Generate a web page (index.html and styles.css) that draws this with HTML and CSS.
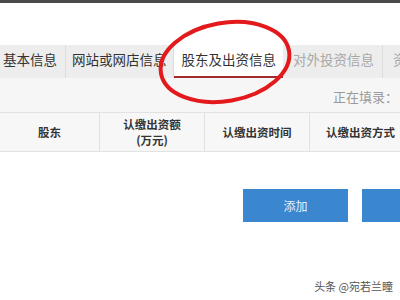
FILE: index.html
```html
<!DOCTYPE html>
<html lang="zh-CN">
<head>
  <meta charset="UTF-8" />
  <title>股东及出资信息</title>
  <link rel="stylesheet" href="styles.css">
</head>
<body>
  <div class="topbar"></div>

  <div class="tabs">
    <div class="tab first">基本信息</div>
    <div class="tab">网站或网店信息</div>
    <div class="tab active">股东及出资信息</div>
    <div class="tab muted">对外投资信息</div>
    <div class="tab muted">资产状况信息</div>
  </div>

  <div class="status">正在填录：</div>

  <div class="thead">
    <div class="th c1">股东</div>
    <div class="th c2">认缴出资额<br>(万元)</div>
    <div class="th c3">认缴出资时间</div>
    <div class="th c4">认缴出资方式</div>
  </div>

  <div class="actions">
    <button class="btn">添加</button>
    <button class="btn">保存</button>
  </div>

  <svg class="circle" width="160" height="100" viewBox="0 0 160 100">
    <ellipse cx="80" cy="50" rx="65" ry="39" transform="rotate(-10 80 50)" fill="none" stroke="#e3191c" stroke-width="4"/>
  </svg>

  <div class="mark">头条 @宛若兰瞳</div>
</body>
</html>
```

FILE: styles.css
```css
html, body {
  margin: 0;
  height: 100%;
  background: #fff;
  font-family: "Noto Sans CJK SC", "Noto Sans", sans-serif;
  overflow: hidden;
  position: relative;
}
.topbar {
  height: 3px;
  background: #4a4a4a;
}
.tabs {
  margin-top: 42px;
  height: 33px;
  display: flex;
  background: #ededed;
  white-space: nowrap;
}
.tab {
  padding: 0 6px;
  font-size: 13.5px;
  line-height: 28px;
  color: #333;
  border-right: 1px solid #dcdcdc;
  flex-shrink: 0;
}
.tab.first { padding-left: 3px; padding-right: 8px; }
.tab.active {
  background: #fff;
  padding: 0 7px 0 8px;
  border-bottom: 2px solid #a02a2e;
  height: 31px;
  border-right: none;
}
.tab.muted { color: #a8a8a8; padding-left: 10px; padding-right: 8px; }
.status {
  height: 34px;
  background: #f6f6f6;
  font-size: 13px;
  color: #9a9a9a;
  padding-left: 333px;
  line-height: 38px;
  white-space: nowrap;
}
.thead {
  display: grid;
  grid-template-columns: 100px 105px 105px 1fr;
  height: 38px;
  background: #f7f7f7;
  border-top: 1px solid #e2e2e2;
  border-bottom: 1px solid #e2e2e2;
}
.th {
  display: flex;
  align-items: center;
  justify-content: center;
  text-align: center;
  font-size: 11.5px;
  font-weight: bold;
  color: #333;
  line-height: 16px;
  border-right: 1px solid #e2e2e2;
  white-space: nowrap;
}
.th.c4 { justify-content: flex-start; padding-left: 16px; border-right: none; }
.actions {
  display: flex;
  gap: 14px;
  padding: 37px 0 0 243px;
}
.btn {
  width: 105px;
  height: 33px;
  flex-shrink: 0;
  border: none;
  background: #3a87cf;
  color: #e6f0fa;
  font-family: inherit;
  font-size: 12px;
}
.circle {
  position: absolute;
  left: 145px;
  top: 12px;
}
.mark {
  position: absolute;
  right: 7px;
  bottom: 6px;
  font-size: 11px;
  color: #555;
}
```
